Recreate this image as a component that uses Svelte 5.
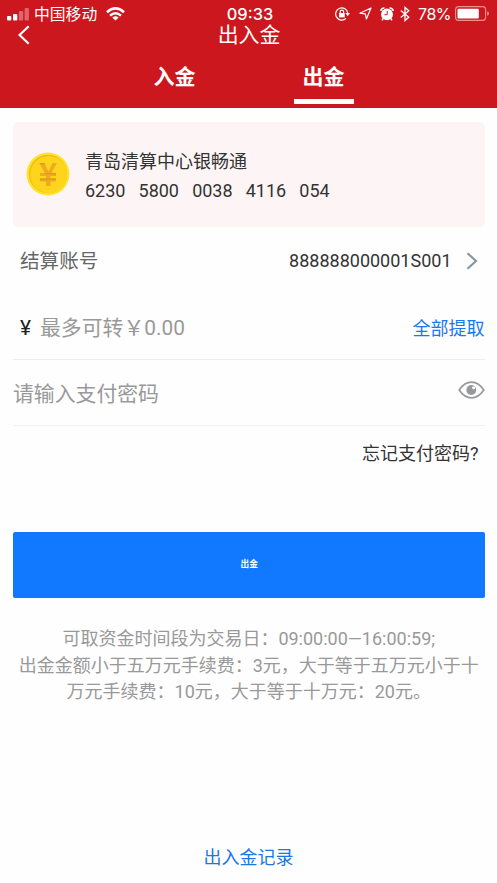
<script>
  let tabs = ['入金', '出金'];
  let active = $state(1);
</script>

<div class="screen">
  <header>
    <div class="status">
      <div class="left">
        <svg class="signal" width="23" height="14" viewBox="0 0 23 14">
          <rect x="0" y="9" width="4.3" height="4.5" rx="1" fill="#fff" />
          <rect x="6" y="7" width="4.3" height="6.5" rx="1" fill="#fff" />
          <rect x="11.9" y="4" width="4.3" height="9.5" rx="1" fill="#e0666b" />
          <rect x="17.6" y="1" width="4.3" height="12.5" rx="1" fill="#e0666b" />
        </svg>
        <span class="carrier">中国移动</span>
        <svg class="wifi" width="19" height="14" viewBox="0 0 19 14" fill="none" stroke="#fff" stroke-width="2.5">
          <path d="M1 5.2Q9.5-2.4 18 5.2" />
          <path d="M4 8.6Q9.5 3.8 15 8.6" />
          <path d="M9.5 13.6 6.3 10.5Q9.5 8.1 12.7 10.5Z" fill="#fff" stroke="none" />
        </svg>
      </div>
      <span class="time">09:33</span>
      <div class="right">
        <svg width="15" height="14" viewBox="0 0 15 14" fill="none" stroke="#fff" stroke-width="1.2">
          <path d="M10.9 11.5A6.1 6.1 0 1 1 12.8 6.2" />
          <path d="M10.4 6H15L12.7 9.2Z" fill="#fff" stroke="none" />
          <rect x="4.1" y="6" width="5.6" height="4.4" fill="#fff" stroke="none" />
          <path d="M5.200 6.200V4.800a1.700 1.700 0 0 1 3.400 0v1.400" />
        </svg>
        <svg class="arrow" width="13" height="13" viewBox="0 0 13 13" fill="none" stroke="#fff" stroke-width="1.2" stroke-linejoin="round">
          <path d="M12 1 .9 6.2 6.3 6.8 7.4 12Z" />
        </svg>
        <svg class="alarm" width="14" height="14" viewBox="0 0 14 14">
          <circle cx="7" cy="7.4" r="5.9" fill="#fff" />
          <path d="M.8 4A3.6 3.6 0 0 1 4.5.9M9.5.9A3.6 3.6 0 0 1 13.2 4M3.200 11.500 2 13.300M10.800 11.500 12 13.300" fill="none" stroke="#fff" stroke-width="1.5" />
          <path d="M7.200 4v3.700H4.400" fill="none" stroke="#cc171e" stroke-width="1" />
        </svg>
        <svg class="bt" width="10" height="16" viewBox="0 0 10 16" fill="none" stroke="#fff" stroke-width="1.3">
          <path d="M.8 4.5 8.8 11.3 5 14.6V1.4L8.8 4.7.8 11.5" />
        </svg>
        <span class="pct">78%</span>
        <svg class="battery" width="35" height="15" viewBox="0 0 35 15">
          <rect x=".6" y=".6" width="30" height="13.8" rx="3" fill="none" stroke="#ec9094" stroke-width="1.1" />
          <rect x="2.5" y="2.7" width="21.3" height="9.7" rx="1" fill="#fff" />
          <path d="M32.2 5.2Q34 5.5 34 7.5T32.2 9.8Z" fill="#ec9094" />
        </svg>
      </div>
    </div>
    <div class="nav">
      <svg width="12" height="20" viewBox="0 0 12 20" fill="none" stroke="#fff" stroke-width="2.2">
        <path d="M10.7 1.2 1.5 10 10.7 18.8" />
      </svg>
      <h1>出入金</h1>
    </div>
    <nav>
      {#each tabs as tab, i}
        <button class="tab" class:active={active === i} onclick={() => (active = i)}>{tab}</button>
      {/each}
    </nav>
  </header>

  <main>
    <section class="card">
      <svg width="44" height="44" viewBox="0 0 44 44">
        <circle cx="22" cy="22" r="21.4" fill="#ffe32b" />
        <circle cx="22" cy="22" r="19.2" fill="#f0bd16" />
        <circle cx="22.700" cy="22.700" r="18.500" fill="#fed51c" />
        <path d="M13.500 11h5l4 8.500 4-8.500h4.500l-5.500 10h4.500v3h-5.500v2.500h5.500v3h-5.500v4.500h-4.500v-4.500h-6v-3h6v-2.500h-6v-3h4.500z" fill="#efab20" />
        <path d="M20 21h10v1.200h-10zM14 26.500h16v1.200h-16zM13.500 11h5l.6 1.200h-5z" fill="#dc981c" />
      </svg>
      <div>
        <p>青岛清算中心银畅通</p>
        <p class="digits">6230&nbsp;&nbsp; 5800&nbsp;&nbsp; 0038&nbsp;&nbsp; 4116&nbsp;&nbsp; 054</p>
      </div>
    </section>

    <div class="account">
      <span class="label">结算账号</span>
      <span class="number">888888000001S001</span>
      <svg width="12" height="18" viewBox="0 0 12 18" fill="none" stroke="#8498a3" stroke-width="2.2">
        <path d="M1.5 1.2 10 9 1.5 16.8" />
      </svg>
    </div>

    <div class="amount">
      <span class="yen">¥</span>
      <span class="hint">最多可转￥0.00</span>
      <span class="link">全部提取</span>
    </div>

    <div class="password">
      <span class="hint">请输入支付密码</span>
      <svg width="27" height="18" viewBox="0 0 27 18">
        <path d="M1.2 9Q6.5 1.2 13.5 1.2T25.8 9Q20.5 16.8 13.5 16.8T1.2 9Z" fill="none" stroke="#96989b" stroke-width="1.7" />
        <circle cx="13.3" cy="9" r="4.9" fill="#96989b" />
        <circle cx="15.6" cy="6.7" r="1.5" fill="#fefefe" />
      </svg>
    </div>

    <div class="forgot">忘记支付密码?</div>
    <button class="submit">出金</button>
    <div class="notes">
      <p>可取资金时间段为交易日：09:00:00—16:00:59;</p>
      <p>出金金额小于五万元手续费：3元，大于等于五万元小于十</p>
      <p>万元手续费：10元，大于等于十万元：20元。</p>
    </div>
  </main>
  <footer>出入金记录</footer>
</div>

<style>
  :global(body) { background: #fefefe; }
  .screen {
    width: 497px;
    height: 883px;
    display: flex;
    flex-direction: column;
    overflow: hidden;
    background: #fefefe;
    color: #333;
    font-family: Roboto, "Noto Sans CJK SC", sans-serif;
    font-size: 18px;
  }
  .screen * { box-sizing: border-box; }
  svg { display: block; flex: none; }
  p, h1 { margin: 0; }
  button { border: 0; padding: 0; font-family: inherit; }
  header { height: 108px; background: #cc171e; color: #fff; flex: none; }
  .status { height: 24px; padding: 3px 7px 0; display: flex; align-items: center; }
  .left, .right { flex: 1; display: flex; align-items: center; height: 21px; }
  .right { justify-content: flex-end; }
  .carrier { font-size: 15.8px; line-height: 20px; margin: 2px 0 0 4px; }
  .signal { margin-top: 1px; }
  .wifi { margin-left: 9px; }
  .time { font: 500 16.4px/20px Inter, Roboto, sans-serif; padding-left: 3px; }
  .arrow { margin-left: 9px; }
  .alarm { margin-left: 8px; }
  .bt { margin-left: 6px; }
  .pct { font: 400 16px/20px Inter, Roboto, sans-serif; margin: 0 4px 0 8px; letter-spacing: -.5px; }
  .nav { height: 24px; padding: 0 0 2px 18px; display: flex; align-items: center; }
  h1 { flex: 1; text-align: center; font-size: 20.9px; line-height: 24px; font-weight: 400; margin: 0 29px 0 0; }
  nav { height: 60px; padding: 0 99px 0 100px; display: flex; justify-content: space-between; }
  .tab {
    width: 150px;
    height: 56px;
    background: none;
    color: #fff;
    font-size: 21px;
    line-height: 58px;
    font-weight: 700;
    display: flex;
    flex-direction: column;
    align-items: center;
  }
  .tab.active::after { content: ""; width: 60px; height: 5px; background: #fff; margin-top: -7px; flex: none; }
  main { padding: 14px 12.5px 0 13px; flex: 1; }
  .card {
    height: 105px;
    border-radius: 5px;
    background: #fdf5f5;
    display: flex;
    align-items: center;
    padding-left: 13px;
  }
  .card svg { margin-top: -2px; }
  .card p { line-height: 30px; }
  .card .digits { letter-spacing: -.04px; margin-top: -1px; }
  .card div { margin: 4px 0 0 15px; }
  .account { height: 67px; display: flex; align-items: center; padding: 0 7px; }
  .label { font-size: 19.6px; color: #666; flex: 1; margin-top: -3px; }
  .number { margin-right: 14px; }
  .amount { height: 66px; display: flex; align-items: center; border-bottom: 1px solid #eee; padding: 1px 0 0 7px; }
  .hint { font-size: 20.85px; line-height: 30px; color: #999; flex: 1; padding-top: 2px; }
  .yen { font-size: 21px; width: 20px; color: #222; padding-top: 2px; }
  .link { color: #1878f0; }
  .password { height: 66px; display: flex; align-items: center; border-bottom: 1px solid #f0f0f0; }
  .password .hint { padding-top: 3px; }
  .password svg { margin-top: -6px; }
  .forgot { height: 106px; padding: 14px 6px 0; line-height: 28px; text-align: right; }
  .submit {
    display: block;
    width: 100%;
    height: 66px;
    border-radius: 2px;
    background: #1079ff;
    color: #fff;
    font-size: 8.7px;
    font-weight: 700;
    padding: 0 0 3px 1px;
  }
  .notes { padding-top: 28px; text-align: center; color: #999; line-height: 26.5px; white-space: nowrap; }
  footer { height: 52px; line-height: 54px; text-align: center; color: #1878e8; }
</style>
